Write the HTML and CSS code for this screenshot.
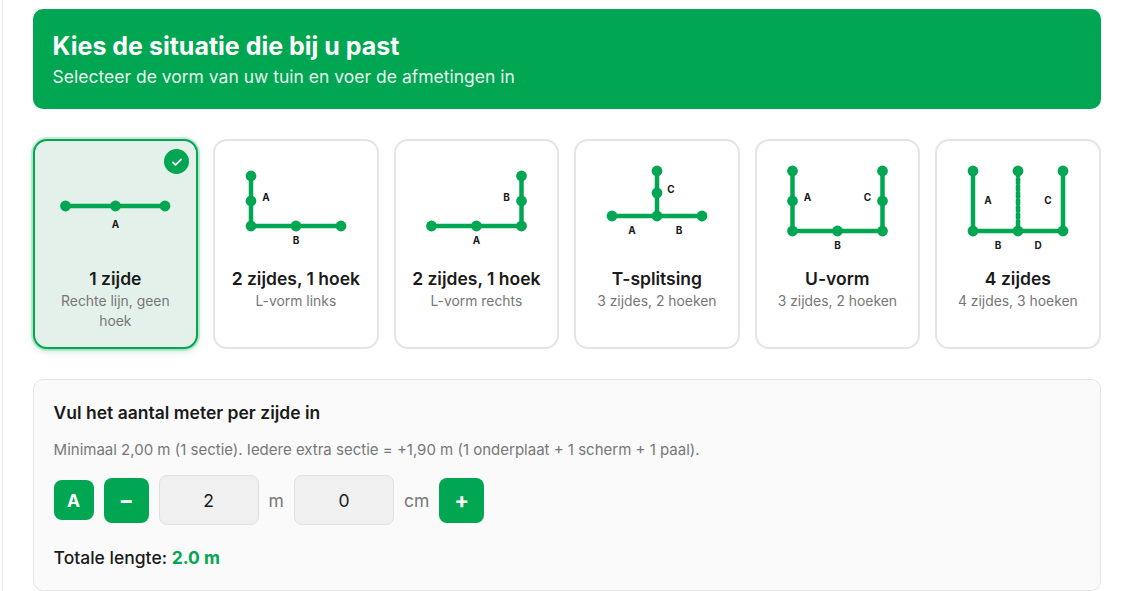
FILE: index.html
```html
<!DOCTYPE html>
<html lang="nl">
<head>
<meta charset="utf-8">
<title>Kies de situatie</title>
<link rel="stylesheet" href="styles.css">
</head>
<body>
<main class="page">
  <header class="hero">
    <h1>Kies de situatie die bij u past</h1>
    <p>Selecteer de vorm van uw tuin en voer de afmetingen in</p>
  </header>

  <section class="cards">
    <article class="card selected">
      <span class="badge"><svg viewBox="0 0 24 24" width="14" height="14"><path d="M5 12.5l4.5 4.5L19 7.5" fill="none" stroke="#fff" stroke-width="3" stroke-linecap="round" stroke-linejoin="round"/></svg></span>
      <svg class="shape" viewBox="0 0 140 90">
        <path class="ln" d="M20 46H120"/>
        <circle cx="20.5" cy="46" r="5.4"/><circle cx="70.5" cy="46" r="5.4"/><circle cx="120" cy="46" r="5.4"/>
        <text x="70.5" y="68">A</text>
      </svg>
      <h2>1 zijde</h2>
      <p>Rechte lijn, geen hoek</p>
    </article>

    <article class="card">
      <svg class="shape" viewBox="0 0 140 90">
        <path class="ln" d="M25 16V66H115"/>
        <circle cx="25" cy="16" r="5.4"/><circle cx="25" cy="41" r="5.4"/><circle cx="25" cy="66" r="5.4"/><circle cx="70" cy="66" r="5.4"/><circle cx="115" cy="66" r="5.4"/>
        <text x="40" y="41">A</text><text x="70" y="84">B</text>
      </svg>
      <h2>2 zijdes, 1 hoek</h2>
      <p>L-vorm links</p>
    </article>

    <article class="card">
      <svg class="shape" viewBox="0 0 140 90">
        <path class="ln" d="M25.5 66H115.5V16"/>
        <circle cx="25.5" cy="66" r="5.4"/><circle cx="70.5" cy="66" r="5.4"/><circle cx="115.5" cy="66" r="5.4"/><circle cx="115.5" cy="41" r="5.4"/><circle cx="115.5" cy="16" r="5.4"/>
        <text x="100.5" y="41">B</text><text x="70.5" y="84">A</text>
      </svg>
      <h2>2 zijdes, 1 hoek</h2>
      <p>L-vorm rechts</p>
    </article>

    <article class="card">
      <svg class="shape" viewBox="0 0 140 90">
        <path class="ln" d="M25 56H115M70 56V11"/>
        <circle cx="25" cy="56" r="5.4"/><circle cx="70" cy="56" r="5.4"/><circle cx="115" cy="56" r="5.4"/><circle cx="70" cy="33" r="5.4"/><circle cx="70" cy="11" r="5.4"/>
        <text x="84" y="33">C</text><text x="45" y="74">A</text><text x="92" y="74">B</text>
      </svg>
      <h2>T-splitsing</h2>
      <p>3 zijdes, 2 hoeken</p>
    </article>

    <article class="card">
      <svg class="shape" viewBox="0 0 140 90">
        <path class="ln" d="M25.5 11V71H115.5V11"/>
        <circle cx="25.5" cy="11" r="5.4"/><circle cx="25.5" cy="41" r="5.4"/><circle cx="25.5" cy="71" r="5.4"/><circle cx="70.5" cy="71" r="5.4"/><circle cx="115.5" cy="71" r="5.4"/><circle cx="115.5" cy="41" r="5.4"/><circle cx="115.5" cy="11" r="5.4"/>
        <text x="40.5" y="41">A</text><text x="100.5" y="41">C</text><text x="70.5" y="89">B</text>
      </svg>
      <h2>U-vorm</h2>
      <p>3 zijdes, 2 hoeken</p>
    </article>

    <article class="card">
      <svg class="shape" viewBox="0 0 140 90">
        <path class="ln" d="M25 11V71H115V11"/>
        <path class="under" d="M70 11V71"/>
        <path class="ln dash" d="M70 11V71"/>
        <circle cx="25" cy="11" r="5.4"/><circle cx="25" cy="71" r="5.4"/><circle cx="70" cy="11" r="5.4"/><circle cx="70" cy="71" r="5.4"/><circle cx="115" cy="11" r="5.4"/><circle cx="115" cy="71" r="5.4"/>
        <text x="40" y="44">A</text><text x="100" y="44">C</text><text x="50" y="89">B</text><text x="90" y="89">D</text>
      </svg>
      <h2>4 zijdes</h2>
      <p>4 zijdes, 3 hoeken</p>
    </article>
  </section>

  <section class="panel">
    <h3>Vul het aantal meter per zijde in</h3>
    <p class="hint">Minimaal 2,00 m (1 sectie). Iedere extra sectie = +1,90 m (1 onderplaat + 1 scherm + 1 paal).</p>
    <div class="row">
      <span class="tag">A</span>
      <button class="step" type="button">−</button>
      <input class="num" type="text" value="2">
      <span class="unit">m</span>
      <input class="num" type="text" value="0">
      <span class="unit">cm</span>
      <button class="step" type="button">+</button>
    </div>
    <p class="total">Totale lengte: <strong>2.0 m</strong></p>
  </section>
</main>
</body>
</html>
```

FILE: styles.css
```css
* { box-sizing: border-box; }
html, body { margin: 0; height: 100%; }
body {
  background: #fff;
  font-family: Inter, "Liberation Sans", sans-serif;
  color: #1a1a1a;
  overflow: hidden;
  padding-left: 2px;
}
.page {
  border-left: 1px solid #ececec;
  height: 100%;
  padding: 9px 21.4px 0 29.6px;
}
.hero {
  background: #00a651;
  color: #fff;
  border-radius: 10px;
  height: 100px;
  padding: 20px;
  margin-bottom: 30px;
}
.hero h1 { margin: 0 0 2px; font-size: 25px; line-height: 34px; font-weight: 700; }
.hero p { margin: 0; font-size: 17.5px; line-height: 24px; opacity: .9; }
.cards {
  display: grid;
  grid-template-columns: repeat(6, 1fr);
  gap: 15px;
  margin-bottom: 30px;
}
.card {
  position: relative;
  height: 210px;
  background: #fff;
  border: 2px solid #e5e5e5;
  border-radius: 14px;
  padding: 19px 10px 0;
  text-align: center;
}
.card.selected {
  background: #e4f1ea;
  border-color: #00a651;
  box-shadow: 0 0 0 2px rgba(0, 166, 81, .18), 0 2px 7px rgba(0, 166, 81, .25);
}
.badge {
  position: absolute;
  top: 8px;
  right: 7px;
  width: 25px;
  height: 25px;
  border-radius: 50%;
  background: #00a651;
  display: flex;
  align-items: center;
  justify-content: center;
}
.shape { display: block; width: 140px; height: 90px; margin: 0 auto 17px; }
.shape circle { fill: #00a651; }
.shape .ln { fill: none; stroke: #00a651; stroke-width: 4.5; }
.shape .under { fill: none; stroke: #00a651; stroke-width: 3.5; }
.shape .dash { stroke-dasharray: 6 1; }
.shape text { font-family: Inter, "Liberation Sans", sans-serif; font-size: 10px; font-weight: 700; fill: #1a1a1a; text-anchor: middle; }
.card h2 { margin: 0; font-size: 17.5px; line-height: 24px; font-weight: 600; }
.card p { margin: 0; padding: 0 6px; font-size: 13.9px; line-height: 20px; color: #777; }
.panel {
  height: 212px;
  background: #fafafa;
  border: 1px solid #e5e5e5;
  border-radius: 10px;
  padding: 20px;
}
.panel h3 { margin: 0 0 14px; font-size: 17.5px; line-height: 26px; font-weight: 600; }
.hint { margin: 0 0 15px; font-size: 15px; line-height: 20px; color: #777; }
.row { display: flex; align-items: center; gap: 10px; }
.tag, .step {
  display: flex; align-items: center; justify-content: center;
  background: #00a651; color: #fff; border: 0; font-family: inherit; font-weight: 700;
}
.tag { width: 40px; height: 40px; border-radius: 8px; font-size: 17.5px; }
.step { width: 45px; height: 45px; border-radius: 8px; font-size: 22px; padding: 0; }
.num {
  width: 100px; height: 50px; border: 1px solid #e0e0e0; border-radius: 8px;
  background: #f0f0f0; text-align: center; font: 17.5px Inter, sans-serif; color: #1a1a1a;
}
.unit { font-size: 17.5px; color: #777; }
.total { margin: 21px 0 0; font-size: 17.5px; line-height: 24px; font-weight: 500; }
.total strong { color: #00a651; font-weight: 700; }
```
